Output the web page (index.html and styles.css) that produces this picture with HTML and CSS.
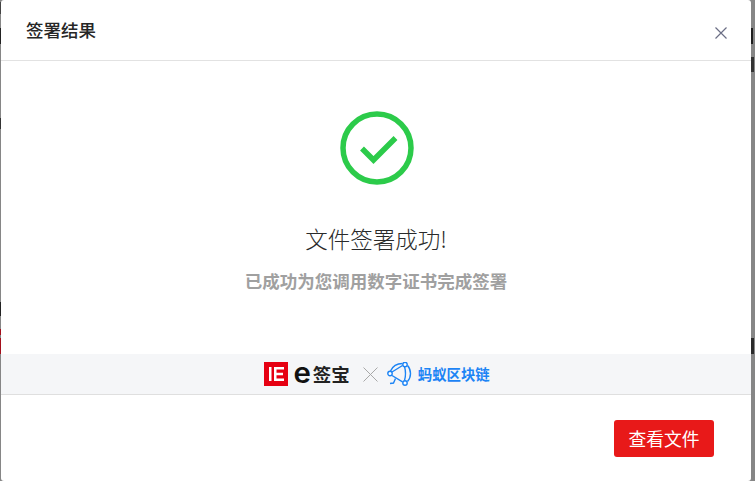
FILE: index.html
```html
<!DOCTYPE html>
<html lang="zh-CN">
<head>
<meta charset="utf-8">
<title>签署结果</title>
<link rel="stylesheet" href="styles.css">
</head>
<body>
<div class="backdrop">
  <span class="scrap scrap-r1"></span>
  <span class="scrap scrap-r2"></span>
  <span class="scrap scrap-r3"></span>
  <span class="bar bar-l0"></span>
  <span class="bar bar-l1"></span>
  <span class="bar bar-l2"></span>
  <span class="bar bar-l3"></span>
  <span class="bar bar-l4"></span>
  <span class="bar bar-l5"></span>
</div>
<main class="modal">
  <header class="modal-head">
    <h1 class="modal-title">签署结果</h1>
    <svg class="close" viewBox="0 0 12 12" aria-label="关闭"><path d="M0.500 0.500 11.500 11.500M11.500 0.500 0.500 11.500"/></svg>
  </header>
  <section class="modal-body">
    <svg class="ok" viewBox="0 0 74 74"><circle cx="37" cy="37" r="34"/><path d="M22 37.500 33.500 49 55.500 27"/></svg>
    <p class="ok-title">文件签署成功!</p>
    <p class="ok-sub">已成功为您调用数字证书完成签署</p>
  </section>
  <div class="brand">
    <svg class="esign-mark" viewBox="0 0 24 24"><rect width="24" height="24" fill="#e60012"/><path d="M5 5H7.500V19H5ZM10 5H20V7.500H12.500V10.700H19V13.300H12.500V16.500H20V19H10Z" fill="#fff"/></svg>
    <span class="esign-e">e</span>
    <span class="esign-name">签宝</span>
    <svg class="times" viewBox="0 0 15 15"><path d="M0.500 0.500 14.500 14.500M14.500 0.500 0.500 14.500"/></svg>
    <svg class="ant" viewBox="0 0 25 24"><g fill="none" stroke="#1c84f5" stroke-width="1.400"><path d="M3.500 9C5.500 4.500 10 1.500 15.500 1.500M20.500 3.500C24.500 8 24.500 15 20.500 19.500M17.500 4.500C18.800 9 18.800 14 17.500 18.500M5 10 15.500 3.500M5 13.500 15.500 19.800"/><circle cx="18" cy="2.500" r="2.200" fill="#fff"/><circle cx="3" cy="11.500" r="2.200" fill="#fff"/><circle cx="18" cy="21" r="2.200" fill="#fff"/><path d="M3 21.500 6.500 21 8.500 16.500"/></g></svg>
    <span class="ant-name">蚂蚁区块链</span>
  </div>
  <footer class="modal-foot">
    <button class="btn-primary" type="button">查看文件</button>
  </footer>
</main>
</body>
</html>
```
FILE: styles.css
```css
html, body {
  margin: 0;
  padding: 0;
  width: 755px;
  height: 481px;
  overflow: hidden;
  background: #868686;
  font-family: "Noto Sans CJK SC", "Liberation Sans", sans-serif;
}
.backdrop {
  position: absolute;
  inset: 0;
  overflow: hidden;
}
.scrap {
  position: absolute;
  left: 751px;
  width: 3px;
  background: #1e1e1e;
}
.scrap-r1 { top: 28px; height: 16px; width: 2px; }
.scrap-r2 { top: 57px; height: 15px; background: #333; }
.scrap-r3 { top: 338px; height: 16px; background: #2a2a2a; }
.bar {
  position: absolute;
  left: 0;
  width: 1px;
}
.bar-l0 { top: 2px; height: 12px; background: #444; }
.bar-l1 { top: 28px; height: 16px; background: #222; }
.bar-l2 { top: 118px; height: 11px; background: #333; }
.bar-l3 { top: 302px; height: 14px; background: #222; }
.bar-l4 { top: 329px; height: 6px; background: #a50f1c; }
.bar-l5 { top: 338px; height: 16px; background: #a50f1c; }
.modal {
  position: absolute;
  left: 1px;
  top: 0;
  width: 750px;
  height: 481px;
  background: #fff;
  border-radius: 3px;
  display: flex;
  flex-direction: column;
}
.modal-head {
  height: 60px;
  border-bottom: 1px solid #e2e2e2;
  display: flex;
  align-items: center;
  justify-content: space-between;
  padding: 0 24px 0 25px;
}
.modal-title {
  margin: 0;
  font-size: 17.500px;
  font-weight: 500;
  line-height: 24px;
  color: #262626;
}
.close {
  width: 12px;
  height: 12px;
  margin-top: 6px;
  fill: none;
  stroke: #6a6e85;
  stroke-width: 1.200;
}
.modal-body {
  flex: 1;
  display: flex;
  flex-direction: column;
  align-items: center;
  padding-top: 50px;
}
.ok {
  width: 74px;
  height: 74px;
  margin-left: 1px;
  fill: none;
  stroke: #2ccb4a;
  stroke-width: 5.500;
}
.ok-title {
  margin: 37px 0 0;
  font-size: 22.500px;
  font-weight: 300;
  line-height: 33px;
  color: #2a2a2a;
}
.ok-sub {
  margin: 14px 0 0;
  font-size: 17.500px;
  line-height: 24px;
  font-weight: 700;
  color: #a0a0a0;
}
.brand {
  height: 40px;
  background: #f5f6f8;
  border-bottom: 1px solid #dfdfdf;
  display: flex;
  align-items: center;
  justify-content: center;
  padding-left: 2px;
}
.esign-mark {
  width: 24px;
  height: 24px;
  display: block;
}
.esign-e {
  font-family: Inter, "Liberation Sans", sans-serif;
  font-size: 28px;
  font-weight: 600;
  line-height: 24px;
  color: #111;
  margin: 0 2px 0 6px;
  position: relative;
  top: -1px;
  transform: scaleX(1.050);
}
.esign-name {
  font-size: 18.500px;
  font-weight: 700;
  line-height: 24px;
  color: #222;
}
.times {
  width: 15px;
  height: 15px;
  margin-left: 13px;
  fill: none;
  stroke: #a8a8a8;
  stroke-width: 1;
}
.ant {
  width: 25px;
  height: 24px;
  margin-left: 9px;
}
.ant-name {
  font-size: 14.400px;
  font-weight: 700;
  line-height: 20px;
  color: #1c84f5;
  margin-left: 6px;
}
.modal-foot {
  height: 86px;
  display: flex;
  justify-content: flex-end;
  align-items: flex-start;
  padding: 25px 37px 0 0;
  box-sizing: border-box;
}
.btn-primary {
  width: 100px;
  height: 37px;
  border: 0;
  border-radius: 3px;
  background: #e81919;
  color: #fff;
  font: 17.800px/24px "Noto Sans CJK SC", sans-serif;
  padding: 0 0 2px;
}
```
